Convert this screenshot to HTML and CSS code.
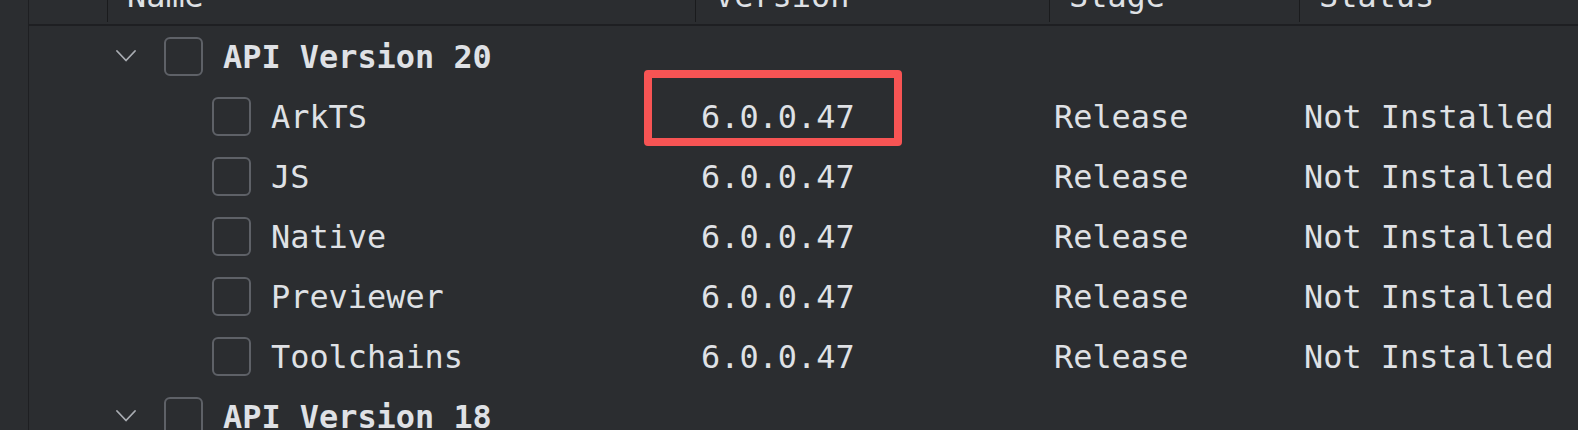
FILE: index.html
```html
<!DOCTYPE html>
<html lang="en">
<head>
  <meta charset="UTF-8" />
  <title>SDK Platforms</title>
  <link rel="stylesheet" href="styles.css">
</head>
<body>
  <div class="page">
    <div class="gutter"></div>

    <div class="table">
      <div class="head">
        <div class="head-cell head-first"></div>
        <div class="head-cell"><span>Name</span></div>
        <div class="head-cell"><span>Version</span></div>
        <div class="head-cell"><span>Stage</span></div>
        <div class="head-cell"><span>Status</span></div>
      </div>

      <div class="row">
        <div class="tree group">
          <svg class="chevron" width="20" height="12" viewBox="0 0 20 12"><polyline points="1,1 10,10.5 19,1" fill="none" stroke="#a9acb2" stroke-width="1.8" stroke-linecap="round" stroke-linejoin="round"/></svg>
          <span class="check"></span>
          <span class="label bold">API Version 20</span>
        </div>
        <div class="cell"></div>
        <div class="cell"></div>
        <div class="cell"></div>
      </div>

      <div class="row">
        <div class="tree child">
          <span class="check"></span>
          <span class="label">ArkTS</span>
        </div>
        <div class="cell version marked">
          <span>6.0.0.47</span>
          <div class="highlight"></div>
        </div>
        <div class="cell"><span>Release</span></div>
        <div class="cell"><span>Not Installed</span></div>
      </div>

      <div class="row">
        <div class="tree child">
          <span class="check"></span>
          <span class="label">JS</span>
        </div>
        <div class="cell version"><span>6.0.0.47</span></div>
        <div class="cell"><span>Release</span></div>
        <div class="cell"><span>Not Installed</span></div>
      </div>

      <div class="row">
        <div class="tree child">
          <span class="check"></span>
          <span class="label">Native</span>
        </div>
        <div class="cell version"><span>6.0.0.47</span></div>
        <div class="cell"><span>Release</span></div>
        <div class="cell"><span>Not Installed</span></div>
      </div>

      <div class="row">
        <div class="tree child">
          <span class="check"></span>
          <span class="label">Previewer</span>
        </div>
        <div class="cell version"><span>6.0.0.47</span></div>
        <div class="cell"><span>Release</span></div>
        <div class="cell"><span>Not Installed</span></div>
      </div>

      <div class="row">
        <div class="tree child">
          <span class="check"></span>
          <span class="label">Toolchains</span>
        </div>
        <div class="cell version"><span>6.0.0.47</span></div>
        <div class="cell"><span>Release</span></div>
        <div class="cell"><span>Not Installed</span></div>
      </div>

      <div class="row">
        <div class="tree group">
          <svg class="chevron" width="20" height="12" viewBox="0 0 20 12"><polyline points="1,1 10,10.5 19,1" fill="none" stroke="#a9acb2" stroke-width="1.8" stroke-linecap="round" stroke-linejoin="round"/></svg>
          <span class="check"></span>
          <span class="label bold">API Version 18</span>
        </div>
        <div class="cell"></div>
        <div class="cell"></div>
        <div class="cell"></div>
      </div>
    </div>
  </div>
</body>
</html>
```

FILE: styles.css
```css
body {
  margin: 0;
  background: #2b2d30;
  color: #dfe1e5;
  font-family: "DejaVu Sans Mono", "Liberation Mono", monospace;
  font-size: 31.9px;
  overflow: hidden;
}

.page {
  display: flex;
  height: 430px;
  overflow: hidden;
}

.gutter {
  width: 28px;
  flex-shrink: 0;
  border-right: 1px solid #1e1f22;
}

.table {
  flex: 1;
}

.head,
.row {
  display: grid;
  grid-template-columns: 78px 588px 354px 250px 1fr;
}

.head {
  height: 24px;
  border-bottom: 2px solid #1e1f22;
  overflow: hidden;
}

.head-cell {
  display: flex;
  align-items: flex-end;
  box-sizing: border-box;
  height: 22px;
  padding: 0 0 10px 19px;
  border-left: 1px solid #1a1b1d;
  line-height: 32px;
  white-space: nowrap;
}

.head-first {
  border-left: none;
}

.row {
  height: 60px;
}

.tree {
  grid-column: 1 / span 2;
  display: flex;
  align-items: center;
}

.tree.group {
  padding-left: 87px;
}

.tree.child {
  padding-left: 183px;
}

.chevron {
  margin-right: 28px;
  flex-shrink: 0;
}

.check {
  width: 39px;
  height: 39px;
  box-sizing: border-box;
  border: 2px solid #5e6167;
  border-radius: 6px;
  margin-right: 20px;
  flex-shrink: 0;
}

.label {
  white-space: nowrap;
  padding-top: 2px;
}

.bold {
  font-weight: bold;
}

.cell {
  display: flex;
  align-items: center;
  padding: 2px 0 0 5px;
  white-space: nowrap;
}

.cell.version {
  padding-left: 6px;
}

.marked {
  position: relative;
}

.highlight {
  position: absolute;
  left: -51px;
  top: -16px;
  width: 258px;
  height: 76px;
  box-sizing: border-box;
  border: 8px solid #f75454;
  border-radius: 4px;
}
```
